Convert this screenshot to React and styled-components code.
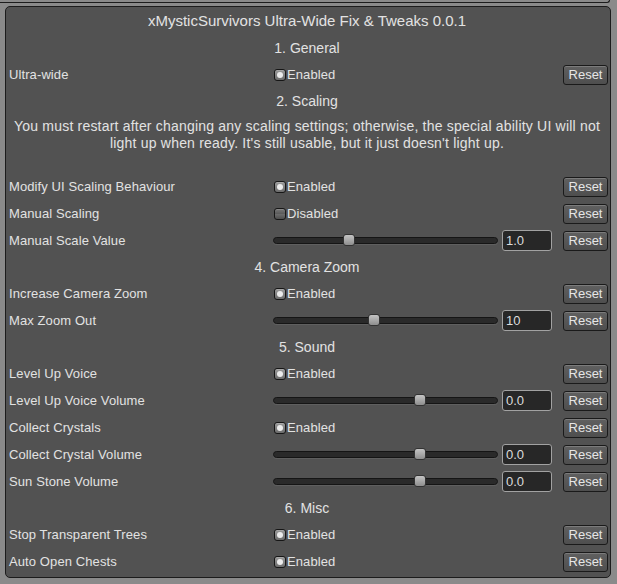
import React from 'react';
import styled, { createGlobalStyle } from 'styled-components';

const GlobalStyle = createGlobalStyle`
  html, body {
    margin: 0;
    padding: 0;
    background: #8a8a8a;
  }
  * {
    box-sizing: border-box;
  }
`;

const Screen = styled.div`
  width: 617px;
  height: 584px;
  overflow: hidden;
  font-family: 'Liberation Sans', Arial, sans-serif;
  color: #e2e2e2;
`;

/* bottom edge of the window above, only a sliver is visible */
const TopEdge = styled.div`
  margin-left: -10px;
  width: 620px;
  height: 3px;
  border-bottom: 1px solid #1c1c1c;
  border-right: 1px solid #1c1c1c;
  border-bottom-right-radius: 4px;
`;

const Panel = styled.div`
  margin: 3px 0 0 5px;
  width: 606px;
  background: #525252;
  border: 1px solid #1c1c1c;
  border-radius: 5px;
  padding: 0 2px 2px 0;
`;

const Title = styled.div`
  height: 27px;
  line-height: 28px;
  text-align: center;
  font-size: 15px;
`;

const SectionHeader = styled.div`
  height: ${(p) => (p.$tall ? 27 : 26)}px;
  line-height: ${(p) => (p.$tall ? 28 : 26)}px;
  text-align: center;
  font-size: 14px;
`;

const Warning = styled.div`
  padding: 4px 0 21px;
  line-height: 17px;
  text-align: center;
  font-size: 14px;
  letter-spacing: 0.2px;
`;

const Row = styled.div`
  display: flex;
  align-items: center;
  height: 27px;
  padding-left: 3px;
`;

const Label = styled.div`
  width: 264px;
  font-size: 13px;
  letter-spacing: 0.1px;
  white-space: nowrap;
`;

const Control = styled.div`
  display: flex;
  align-items: center;
  flex: 1;
`;

const ToggleBox = styled.span`
  position: relative;
  width: 12px;
  height: 12px;
  margin-left: 1px;
  border-radius: 3px;
  border: 1px solid #161616;
  background: ${(p) =>
    p.$on
      ? 'linear-gradient(#9a9a9a, #6c6c6c)'
      : 'linear-gradient(#777 0%, #5c5c5c 45%, #6a6a6a 55%, #4e4e4e 100%)'};
  box-shadow: inset 0 1px 0 rgba(255, 255, 255, 0.15);

  &::after {
    content: '';
    display: ${(p) => (p.$on ? 'block' : 'none')};
    position: absolute;
    left: 2px;
    top: 2px;
    width: 6px;
    height: 6px;
    border-radius: 50%;
    background: #ececec;
  }
`;

const ToggleText = styled.span`
  margin-left: 1px;
  font-size: 13px;
  letter-spacing: 0.1px;
`;

const Track = styled.div`
  position: relative;
  width: 225px;
  height: 7px;
  border-radius: 4px;
  background: #2a2a2a;
  border: 1px solid #151515;
  box-shadow: 0 1px 0 rgba(255, 255, 255, 0.08);
`;

const Thumb = styled.div`
  position: absolute;
  top: -4px;
  width: 12px;
  height: 12px;
  border-radius: 3px;
  border: 1px solid #333;
  background: linear-gradient(#c4c4c4, #8e8e8e);
`;

const Field = styled.div`
  width: 50px;
  height: 21px;
  margin-left: 4px;
  padding-left: 3px;
  line-height: 19px;
  font-size: 13px;
  background: #272727;
  border: 1px solid #a2a2a2;
  border-radius: 3px;
  color: #dcdcdc;
`;

const ResetButton = styled.button`
  width: 45px;
  height: 20px;
  padding: 0;
  margin-left: auto;
  font-family: 'Liberation Sans', Arial, sans-serif;
  font-size: 13px;
  color: #e6e6e6;
  background: linear-gradient(#606060, #4e4e4e);
  border: 1px solid #1a1a1a;
  border-radius: 3px;
  box-shadow: inset 0 1px 0 rgba(255, 255, 255, 0.18);
`;

function Toggle({ on }) {
  return (
    <>
      <ToggleBox $on={on} />
      <ToggleText>{on ? 'Enabled' : 'Disabled'}</ToggleText>
    </>
  );
}

function Slider({ frac, value }) {
  return (
    <>
      <Track>
        <Thumb style={{ left: Math.round(frac * 211) - 1 }} />
      </Track>
      <Field>{value}</Field>
    </>
  );
}

function Setting({ label, on, slider }) {
  return (
    <Row>
      <Label>{label}</Label>
      <Control>
        {slider ? <Slider {...slider} /> : <Toggle on={on} />}
        <ResetButton>Reset</ResetButton>
      </Control>
    </Row>
  );
}

export default function App() {
  return (
    <Screen>
      <GlobalStyle />
      <TopEdge />
      <Panel>
        <Title>xMysticSurvivors Ultra-Wide Fix &amp; Tweaks 0.0.1</Title>

        <SectionHeader $tall>1. General</SectionHeader>
        <Setting label="Ultra-wide" on />

        <SectionHeader>2. Scaling</SectionHeader>
        <Warning>
          You must restart after changing any scaling settings; otherwise, the special ability UI will not
          <br />
          light up when ready. It's still usable, but it just doesn't light up.
        </Warning>
        <Setting label="Modify UI Scaling Behaviour" on />
        <Setting label="Manual Scaling" on={false} />
        <Setting label="Manual Scale Value" slider={{ frac: 0.33, value: '1.0' }} />

        <SectionHeader>4. Camera Zoom</SectionHeader>
        <Setting label="Increase Camera Zoom" on />
        <Setting label="Max Zoom Out" slider={{ frac: 0.45, value: '10' }} />

        <SectionHeader>5. Sound</SectionHeader>
        <Setting label="Level Up Voice" on />
        <Setting label="Level Up Voice Volume" slider={{ frac: 0.67, value: '0.0' }} />
        <Setting label="Collect Crystals" on />
        <Setting label="Collect Crystal Volume" slider={{ frac: 0.67, value: '0.0' }} />
        <Setting label="Sun Stone Volume" slider={{ frac: 0.67, value: '0.0' }} />

        <SectionHeader>6. Misc</SectionHeader>
        <Setting label="Stop Transparent Trees" on />
        <Setting label="Auto Open Chests" on />
      </Panel>
    </Screen>
  );
}
